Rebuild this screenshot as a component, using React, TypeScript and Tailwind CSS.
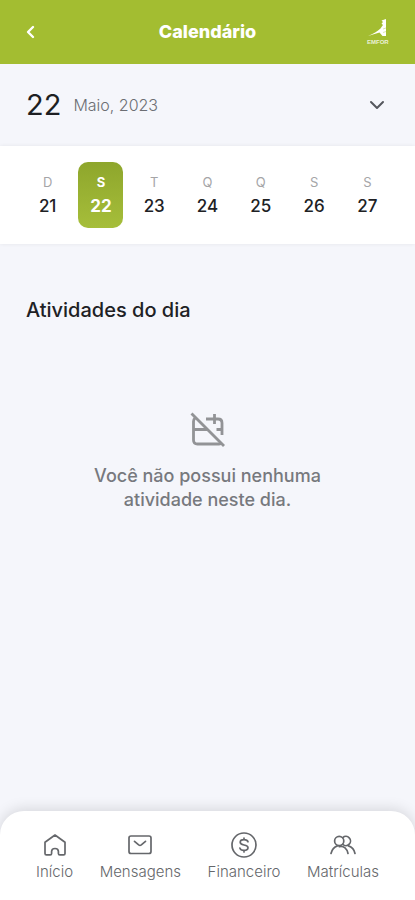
import type { ReactNode } from "react";

type Day = { letter: string; number: number };

const days: Day[] = [
  { letter: "D", number: 21 },
  { letter: "S", number: 22 },
  { letter: "T", number: 23 },
  { letter: "Q", number: 24 },
  { letter: "Q", number: 25 },
  { letter: "S", number: 26 },
  { letter: "S", number: 27 },
];

const selected = 22;

function Icon({ children }: { children: ReactNode }) {
  return (
    <svg
      width="28"
      height="28"
      viewBox="0 0 28 28"
      fill="none"
      stroke="currentColor"
      strokeWidth="1.7"
      strokeLinecap="round"
      strokeLinejoin="round"
      aria-hidden="true"
    >
      {children}
    </svg>
  );
}

function HomeIcon() {
  return (
    <Icon>
      <path d="M4 11.2 L14 4 L24 11.2 V22.4 Q24 23.8 22.6 23.8 H18.8 Q17.4 23.8 17.4 22.4 V20.5 Q17.4 17.5 14 17.5 Q10.6 17.5 10.6 20.5 V22.4 Q10.6 23.8 9.2 23.8 H5.4 Q4 23.8 4 22.4 Z" />
    </Icon>
  );
}

function MailIcon() {
  return (
    <Icon>
      <rect x="3" y="5" width="22" height="17.5" rx="2" />
      <path d="M8.5 10.3 L12.7 13.8 Q14 14.8 15.3 13.8 L19.5 10.3" />
    </Icon>
  );
}

function MoneyIcon() {
  return (
    <Icon>
      <circle cx="14" cy="14" r="12" />
      <path d="M18 10.8 C17.5 9.3 16 8.7 14 8.7 C11.7 8.7 10.2 9.7 10.2 11.3 C10.2 13.2 12 13.6 14 14 C16.2 14.4 18 15 18 16.8 C18 18.5 16.3 19.4 14 19.4 C11.8 19.4 10.3 18.6 9.9 17.1 M14 7 V8.7 M14 19.4 V21" />
    </Icon>
  );
}

function PeopleIcon() {
  return (
    <Icon>
      <circle cx="10.2" cy="10" r="4.6" />
      <path d="M13.8 6.6 A4.6 4.6 0 1 1 13.8 13.4" />
      <path d="M2 22.5 C3 18.5 5 16 8.3 14.9" />
      <path d="M10.2 15.6 C14.8 14.4 18.2 17.8 19 22.5" />
      <path d="M19.5 14.9 C23 16 25.2 18.5 26 22.5" />
    </Icon>
  );
}

const links = [
  { label: "Início", icon: <HomeIcon /> },
  { label: "Mensagens", icon: <MailIcon /> },
  { label: "Financeiro", icon: <MoneyIcon /> },
  { label: "Matrículas", icon: <PeopleIcon /> },
];

function Logo() {
  return (
    <svg width="20" height="26" viewBox="0 0 20 26" role="img" aria-label="Logo">
      <path
        d="M19 0 L14.5 1.5 L16 3 L14.5 4.5 L16 6 L14.5 8 L13.5 9.5 C10.5 12.5 6.5 14.5 1 17 L12.5 13.5 L15.5 17 H19 Z"
        fill="white"
      />
      <path
        d="M16 13.5 L19 12.5 M16 10 L19 9"
        stroke="#a3bd31"
        strokeWidth="0.4"
      />
      <text
        x="0"
        y="25"
        fontSize="6"
        fontWeight="600"
        fontFamily="Liberation Sans, sans-serif"
        fill="white"
        fillOpacity="0.8"
      >
        EMFOR
      </text>
    </svg>
  );
}

function Header() {
  return (
    <header className="h-16 px-6 bg-[#a3bd31] text-white grid grid-cols-[1fr_auto_1fr] items-center">
      <button type="button" aria-label="Voltar" className="justify-self-start">
        <svg
          width="14"
          height="16"
          viewBox="0 0 14 16"
          fill="none"
          stroke="currentColor"
          strokeWidth="2.4"
          strokeLinecap="round"
          strokeLinejoin="round"
        >
          <path d="M9 3 L4 8 L9 13" />
        </svg>
      </button>
      <h1 className="text-lg font-extrabold">Calendário</h1>
      <div className="justify-self-end pr-1 [&>svg]:overflow-visible">
        <Logo />
      </div>
    </header>
  );
}

function DayButton({ day }: { day: Day }) {
  const active = day.number === selected;
  return (
    <button
      type="button"
      aria-pressed={active}
      className={
        active
          ? "w-[45px] h-[66px] pb-[2px] rounded-[10px] bg-linear-to-b from-[#8ea62c] to-[#a6be3a] text-white flex flex-col items-center justify-center"
          : "w-[45px] h-[66px] pb-[2px] text-[#202124] flex flex-col items-center justify-center"
      }
    >
      <span
        className={
          active
            ? "text-[13px] leading-6 font-bold"
            : "text-[13px] leading-6 text-[#a5a5a7]"
        }
      >
        {day.letter}
      </span>
      <span
        className={
          active
            ? "text-[17px] leading-6 font-bold"
            : "text-[17px] leading-6 font-medium"
        }
      >
        {day.number}
      </span>
    </button>
  );
}

function CalendarOffIcon() {
  return (
    <svg
      width="36"
      height="36"
      viewBox="0 0 36 36"
      fill="none"
      stroke="#929396"
      strokeWidth="2.8"
      strokeLinejoin="round"
      aria-hidden="true"
    >
      <path d="M1.5 1.5 L34 34" />
      <path d="M5 6 Q3.5 7.5 3.5 9.5 V28 Q3.5 32 7.5 32 H29 Q31 32 32 31" />
      <path d="M4 17.5 H17 M26.5 17.5 H32" />
      <path d="M16 7 H28 Q32 7 32 11 V23" />
      <path d="M24.5 2 V12" />
    </svg>
  );
}

function App() {
  return (
    <div className="min-h-screen flex flex-col bg-[#f5f6fb] font-['Inter',sans-serif]">
      <Header />
      <button
        type="button"
        className="h-[82px] px-[26px] flex items-center justify-between text-left"
      >
        <span className="flex items-center gap-3">
          <span className="text-[29px] leading-9 text-[#1d1e22]">22</span>
          <span className="text-base text-[#6c6e73] font-light">
            Maio, 2023
          </span>
        </span>
        <span className="pr-1">
          <svg
            width="16"
            height="16"
            viewBox="0 0 16 16"
            fill="none"
            stroke="#55575d"
            strokeWidth="2"
            strokeLinecap="round"
            strokeLinejoin="round"
          >
            <path d="M2 5 L8 11 L14 5" />
          </svg>
        </span>
      </button>
      <div className="bg-white px-[21px] py-4 grid grid-cols-7 justify-items-center shadow-[0_0_4px_rgba(0,0,0,0.07)]">
        {days.map((day) => (
          <DayButton key={day.number} day={day} />
        ))}
      </div>
      <main className="pt-[52px] px-[26px]">
        <h2 className="text-xl leading-7 font-medium text-[#202124]">
          Atividades do dia
        </h2>
        <div className="pt-[88px] flex flex-col items-center">
          <CalendarOffIcon />
          <p className="mt-4 w-60 text-center text-lg leading-6 font-medium text-[#77797e]">
            Você não possui nenhuma atividade neste dia.
          </p>
        </div>
      </main>
      <nav className="mt-auto h-[89px] px-9 pt-5 bg-white rounded-t-3xl shadow-[0_-2px_14px_rgba(0,0,0,0.13)] flex items-start justify-between">
        {links.map((link) => (
          <a
            key={link.label}
            href="#"
            className="flex flex-col items-center gap-[3px] text-[#65676b]"
          >
            {link.icon}
            <span className="text-[15px] leading-5 font-light">
              {link.label}
            </span>
          </a>
        ))}
      </nav>
    </div>
  );
}

export default App;
